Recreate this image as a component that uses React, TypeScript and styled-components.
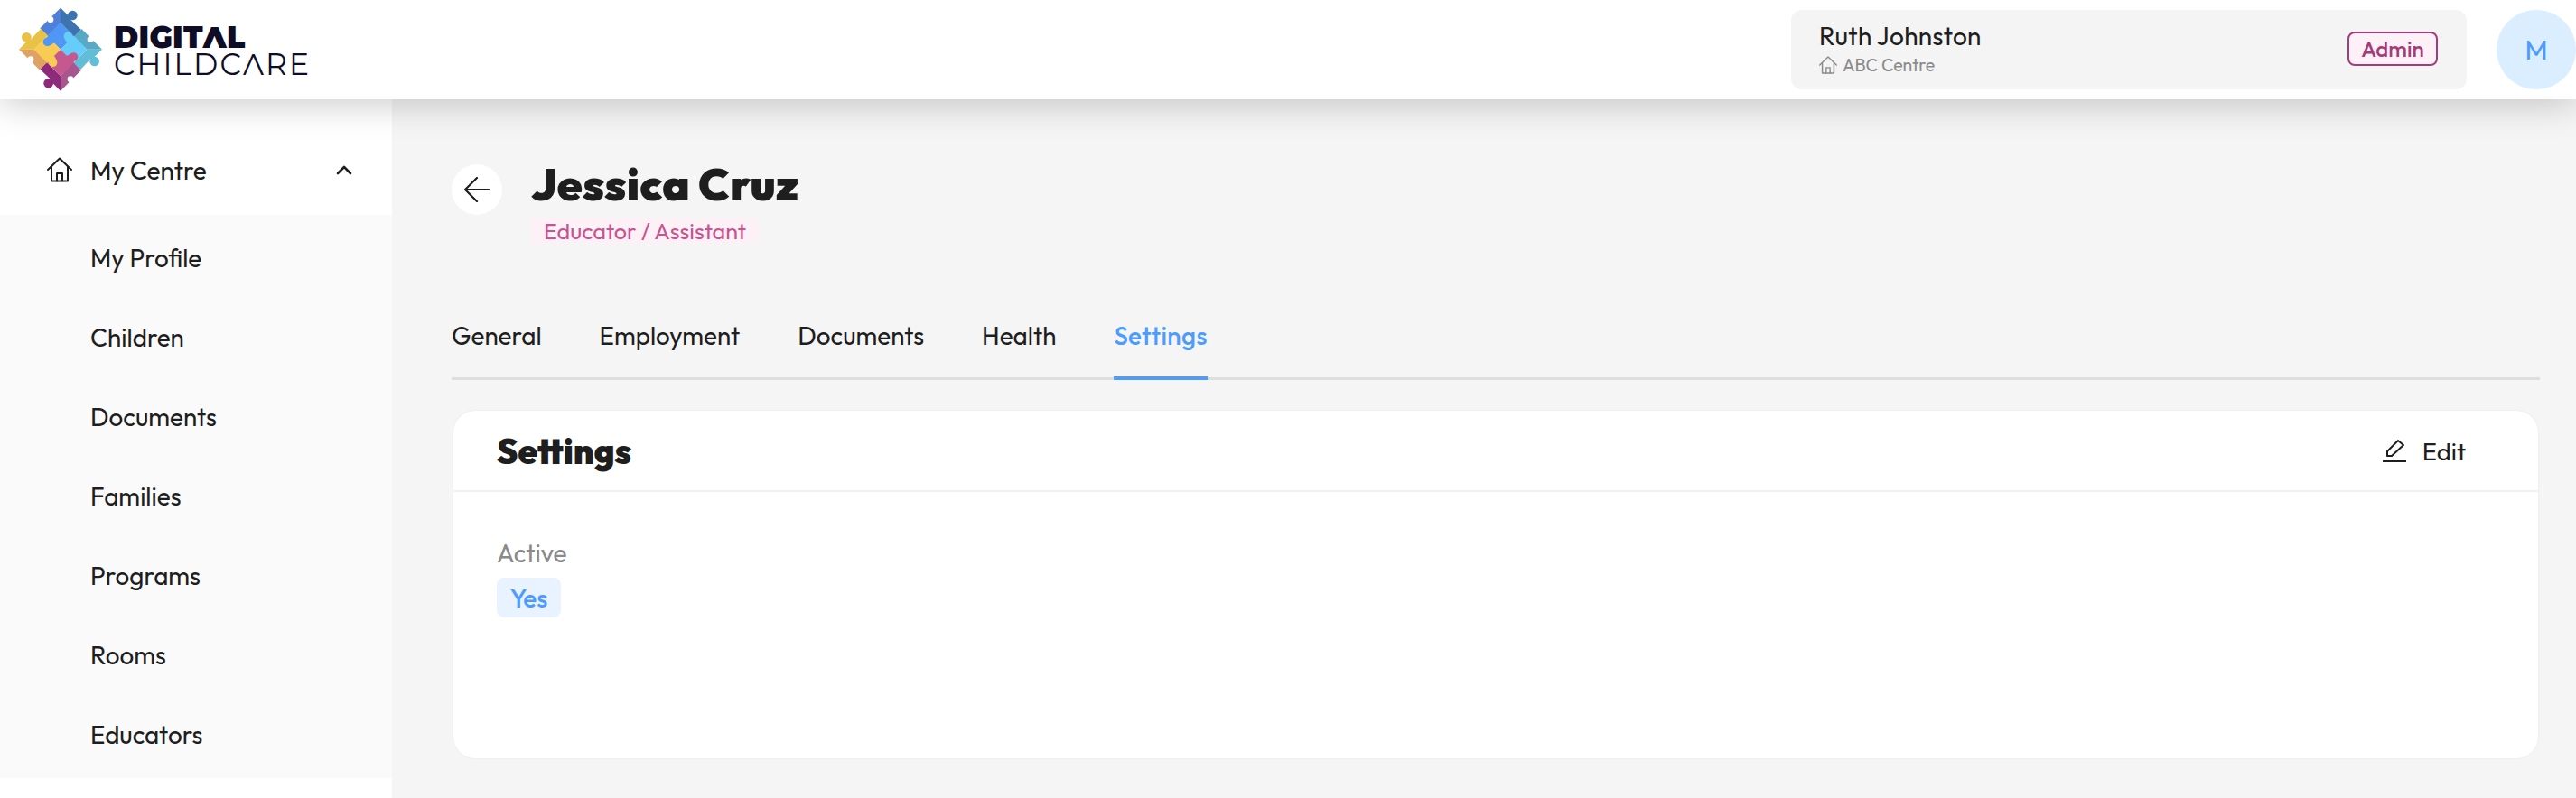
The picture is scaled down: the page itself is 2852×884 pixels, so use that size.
import React from 'react'
import styled, { createGlobalStyle } from 'styled-components'

const GlobalStyle = createGlobalStyle`
    html, body {
        margin: 0;
        padding: 0;
        height: 100%;
        overflow: hidden;
        background: #f5f5f5;
        font-family: 'Outfit', 'Lato', 'Liberation Sans', sans-serif;
        color: #1e1e1e;
    }
    * {
        box-sizing: border-box;
    }
`

const Page = styled.div`
    width: 2852px;
    height: 884px;
    display: flex;
    flex-direction: column;
    overflow: hidden;
`

const Header = styled.header`
    position: relative;
    z-index: 2;
    flex: 0 0 110px;
    height: 110px;
    display: flex;
    align-items: center;
    justify-content: space-between;
    background: #fff;
    box-shadow: 0 4px 40px rgb(0 0 0 / 22%);
    padding-left: 20px;
`

const Brand = styled.div`
    display: flex;
    align-items: center;
    gap: 12px;
`

const BrandText = styled.div`
    display: flex;
    flex-direction: column;
    color: #0f0c26;
    font-family: 'Montserrat', 'Lato', sans-serif;
    line-height: 30px;
    margin-top: 1px;
`

const BrandStrong = styled.span`
    font-size: 33px;
    font-weight: 900;
    letter-spacing: 0.3px;
`

const BrandLight = styled.span`
    font-size: 33px;
    font-weight: 400;
    letter-spacing: 2.1px;
`

const HeaderRight = styled.div`
    display: flex;
    align-items: center;
    gap: 33px;
`

const UserCard = styled.div`
    width: 748px;
    height: 88px;
    border-radius: 12px;
    background: #f4f4f4;
    display: flex;
    align-items: center;
    justify-content: space-between;
    padding: 0 32px 0 31px;
`

const UserName = styled.div`
    font-size: 28px;
    font-weight: 450;
    line-height: 34px;
    letter-spacing: 0.3px;
    margin-top: -2px;
`

const UserCentre = styled.div`
    display: flex;
    align-items: center;
    gap: 6px;
    margin-top: 1px;
    font-size: 19.500px;
    line-height: 28px;
    color: #8a8a8a;
`

const RoleBadge = styled.div`
    width: 100px;
    height: 38px;
    margin-bottom: 3px;
    display: flex;
    align-items: center;
    justify-content: center;
    border: 2px solid #a63b7a;
    border-radius: 8px;
    background: #fdf0f7;
    color: #a63b7a;
    font-size: 24px;
    font-weight: 500;
`

const Avatar = styled.div`
    width: 88px;
    height: 88px;
    border-radius: 50%;
    background: #dbeeff;
    color: #4e9bff;
    font-size: 30px;
    display: flex;
    align-items: center;
    justify-content: center;
`

const Body = styled.div`
    flex: 1;
    display: flex;
    min-height: 0;
`

const Sidebar = styled.nav`
    flex: 0 0 434px;
    background: #fff;
    padding-top: 28px;
`

const NavParent = styled.div`
    height: 100px;
    display: flex;
    align-items: center;
    padding: 0 44px 0 52px;
    gap: 20px;
    font-size: 28px;
    font-weight: 450;
`

const NavParentLabel = styled.span`
    flex: 1;
`

const NavChildren = styled.div`
    background: #fafafa;
    padding: 3px 0 5px;
`

const NavChild = styled.div`
    height: 88px;
    display: flex;
    align-items: center;
    padding-left: 100px;
    font-size: 27.800px;
    font-weight: 450;
`

const Main = styled.main`
    flex: 1;
    padding: 72px 40px 0 66px;
    min-width: 0;
`

const TitleRow = styled.div`
    display: flex;
    align-items: flex-start;
    gap: 32px;
`

const BackButton = styled.button`
    width: 56px;
    height: 56px;
    border: 0;
    padding: 0;
    border-radius: 50%;
    background: #fff;
    display: flex;
    align-items: center;
    justify-content: center;
`

const TitleBlock = styled.div`
    display: flex;
    flex-direction: column;
    align-items: flex-start;
    margin-top: -8px;
`

const Title = styled.h1`
    margin: 0;
    font-size: 50px;
    line-height: 60px;
    font-weight: 900;
    letter-spacing: 0.2px;
    color: #1e1e1e;
`

const RoleChip = styled.div`
    margin-top: 8px;
    height: 27px;
    padding: 0 14px;
    display: flex;
    align-items: center;
    background: #fdf1f7;
    color: #c8548f;
    font-size: 25.200px;
`

const Tabs = styled.div`
    margin-top: 69px;
    display: flex;
    gap: 64px;
    border-bottom: 3px solid #dedede;
`

const Tab = styled.div<{ $active?: boolean }>`
    height: 83px;
    padding-top: 16px;
    margin-bottom: -3px;
    font-size: 27.800px;
    line-height: 36px;
    font-weight: ${({ $active }) => ($active ? 500 : 450)};
    letter-spacing: ${({ $active }) => ($active ? '0.4px' : '0')};
    color: ${({ $active }) => ($active ? '#4e9bff' : '#1e1e1e')};
    border-bottom: 4px solid ${({ $active }) => ($active ? '#4e9bff' : 'transparent')};
`

const Card = styled.section`
    margin: 34px 2px 0;
    height: 385px;
    background: #fff;
    border-radius: 24px;
    box-shadow: 0 0 2px rgb(0 0 0 / 8%);
`

const CardHeader = styled.div`
    height: 90px;
    display: flex;
    align-items: center;
    justify-content: space-between;
    padding: 0 80px 0 48px;
    border-bottom: 2px solid #f2f2f2;
`

const CardTitle = styled.h2`
    margin: 0;
    font-size: 38.500px;
    font-weight: 900;
    color: #1e1e1e;
`

const EditButton = styled.div`
    display: flex;
    align-items: center;
    gap: 18px;
    font-size: 27.500px;
    font-weight: 450;
`

const CardBody = styled.div`
    padding: 50px 48px 0;
`

const FieldLabel = styled.div`
    font-size: 28px;
    line-height: 36px;
    font-weight: 450;
    color: #8a8a8a;
`

const ValuePill = styled.div`
    margin-top: 9px;
    width: 71px;
    height: 44px;
    border-radius: 8px;
    background: #e8f3ff;
    color: #4e9bff;
    font-size: 28px;
    font-weight: 500;
    display: flex;
    align-items: center;
    justify-content: center;
`

const HomeIcon = ({ size, color }: { size: number; color: string }) => (
    <svg width={size} height={size} viewBox="0 0 28 28" fill="none" stroke={color} strokeWidth="2" strokeLinejoin="round" strokeLinecap="round">
        <path d="M1 14 14 1.500 27 14" />
        <path d="M5 11V26.500H23V11" />
        <path d="M11 26.500V18H17V26.500" />
    </svg>
)

// the four quarters of the puzzle are the same piece turned around the centre
const puzzleQuarters = [
    { turn: 0, outer: '#3d74b0', side: '#4f7fd9', inner: '#4f96f5' },
    { turn: 90, outer: '#62bdd6', side: '#57a9c6', inner: '#66cdfb' },
    { turn: 180, outer: '#8e2a7c', side: '#a9558f', inner: '#c4588f' },
    { turn: 270, outer: '#e8c245', side: '#dfa263', inner: '#f8cb52' },
]

const Logo = () => (
    <svg width="94" height="94" viewBox="60 18 280 282">
        {puzzleQuarters.map((q) => (
            <g key={q.turn} transform={`rotate(${q.turn} 200 158)`}>
                <path fill={q.outer} d="M200 70V20L226 46 232 58 268 92 246 116Z" />
                <circle cx="240" cy="45" r="16" fill={q.outer} />
                <path fill={q.side} d="M200 20 132 88 158 115 200 70Z" />
                <circle cx="167" cy="59" r="10" fill="#fff" />
                <path fill={q.inner} d="M200 70 245 115 200 158 155 113Z" />
            </g>
        ))}
        {puzzleQuarters.map((q) => (
            <g key={q.turn} transform={`rotate(${q.turn} 200 158)`}>
                <path fill={q.inner} d="M160 112 148 128 162 146 180 136Z" />
                <circle cx="156" cy="133" r="14" fill={q.inner} />
            </g>
        ))}
    </svg>
)

const navItems = ['My Profile', 'Children', 'Documents', 'Families', 'Programs', 'Rooms', 'Educators']
const tabs = ['General', 'Employment', 'Documents', 'Health', 'Settings']

export default function App() {
    return (
        <Page>
            <GlobalStyle />
            <Header>
                <Brand>
                    <Logo />
                    <BrandText>
                        <BrandStrong>DIGITΛL</BrandStrong>
                        <BrandLight>CHILDCΛRE</BrandLight>
                    </BrandText>
                </Brand>
                <HeaderRight>
                    <UserCard>
                        <div>
                            <UserName>Ruth Johnston</UserName>
                            <UserCentre>
                                <HomeIcon size={20} color="#8a8a8a" />
                                ABC Centre
                            </UserCentre>
                        </div>
                        <RoleBadge>Admin</RoleBadge>
                    </UserCard>
                    <Avatar>M</Avatar>
                </HeaderRight>
            </Header>
            <Body>
                <Sidebar>
                    <NavParent>
                        <HomeIcon size={28} color="#1e1e1e" />
                        <NavParentLabel>My Centre</NavParentLabel>
                        <svg width="18" height="12" viewBox="0 0 18 12" fill="none" stroke="#1e1e1e" strokeWidth="2.600" strokeLinecap="round" strokeLinejoin="round">
                            <path d="M2 10 9 3l7 7" />
                        </svg>
                    </NavParent>
                    <NavChildren>
                        {navItems.map((item) => (
                            <NavChild key={item}>{item}</NavChild>
                        ))}
                    </NavChildren>
                </Sidebar>
                <Main>
                    <TitleRow>
                        <BackButton>
                            <svg width="28" height="28" viewBox="0 0 28 28" fill="none" stroke="#1e1e1e" strokeWidth="2.200" strokeLinecap="round" strokeLinejoin="round">
                                <path d="M1 14H27M14 1 1 14l13 13" />
                            </svg>
                        </BackButton>
                        <TitleBlock>
                            <Title>Jessica Cruz</Title>
                            <RoleChip>Educator / Assistant</RoleChip>
                        </TitleBlock>
                    </TitleRow>
                    <Tabs>
                        {tabs.map((tab) => (
                            <Tab key={tab} $active={tab === 'Settings'}>{tab}</Tab>
                        ))}
                    </Tabs>
                    <Card>
                        <CardHeader>
                            <CardTitle>Settings</CardTitle>
                            <EditButton>
                                <svg width="26" height="26" viewBox="0 0 26 26" fill="none" stroke="#1e1e1e" strokeWidth="2" strokeLinejoin="round">
                                    <path d="M5 19V14L17 2l6 5L10 19Z" />
                                    <path d="M0 25H26" />
                                </svg>
                                Edit
                            </EditButton>
                        </CardHeader>
                        <CardBody>
                            <FieldLabel>Active</FieldLabel>
                            <ValuePill>Yes</ValuePill>
                        </CardBody>
                    </Card>
                </Main>
            </Body>
        </Page>
    )
}
